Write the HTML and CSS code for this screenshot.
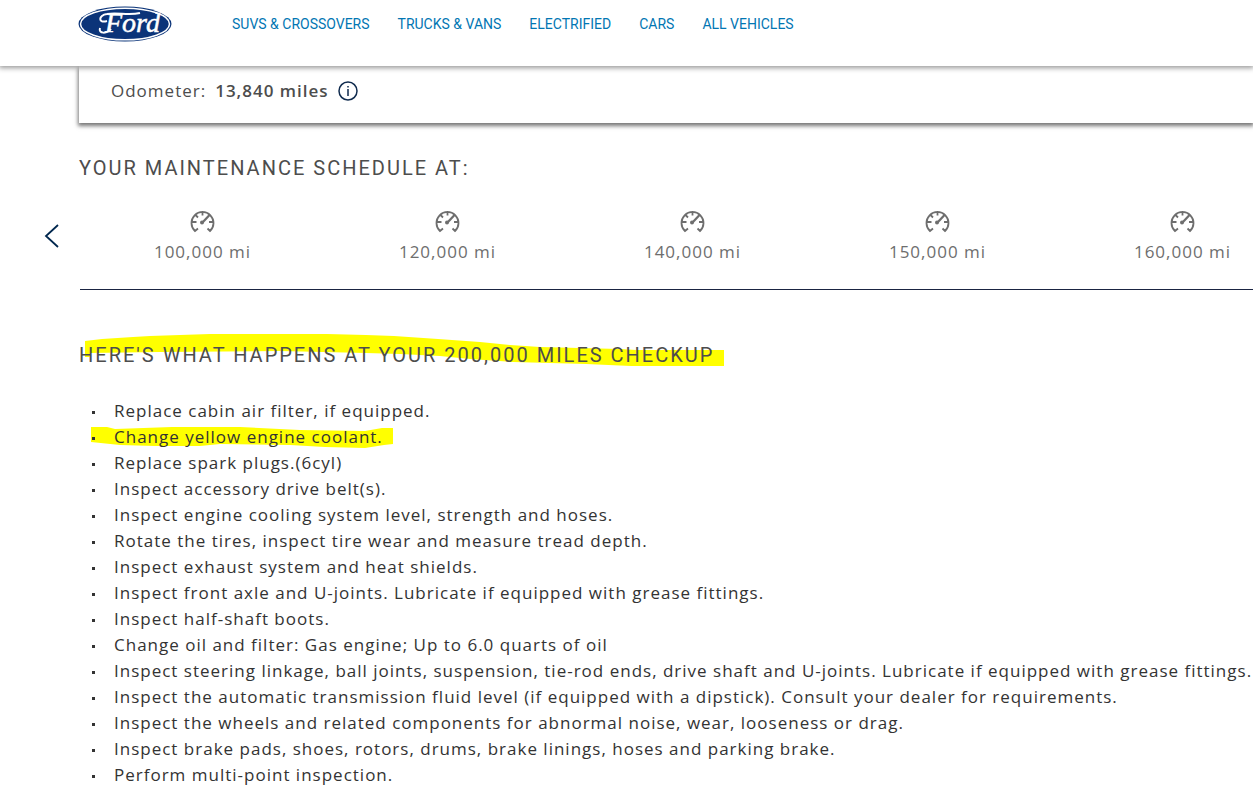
FILE: index.html
```html
<!DOCTYPE html>
<html lang="en">
<head>
<meta charset="utf-8">
<title>Ford Maintenance Schedule</title>
<link rel="stylesheet" href="styles.css">
</head>
<body>
<svg class="defs" aria-hidden="true">
  <symbol id="gauge" viewBox="0 0 26 24">
    <g fill="none" stroke="currentColor" stroke-width="1.800">
      <path d="M8 19.500 L5 22 A11 11 0 1 1 20 22 L17.500 19.500 M1.500 13 H6.500 M12.500 2 V6.500 M19 13 H23.500 M5 5.500 L8 8.500"/>
      <path d="M12.500 13.500 L20 5.500" stroke-width="2.200"/>
    </g>
    <circle cx="12" cy="13.500" r="2" fill="currentColor"/>
  </symbol>
</svg>
<header class="header">
  <a class="logo" href="#" aria-label="Ford home">
    <svg width="94" height="36" viewBox="0 0 94 36">
      <ellipse cx="47" cy="18" rx="46.500" ry="17.500" fill="#0b3479"/>
      <ellipse cx="47" cy="18" rx="44.500" ry="15.800" fill="none" stroke="#fff" stroke-width="1.500"/>
      <path d="M29 15 C20 18 20 9 29 8 C40 6 50 10 62 7" fill="none" stroke="#fff" stroke-width="2"/>
      <path d="M22 22 C20 28 29 28 33 23" fill="none" stroke="#fff" stroke-width="2"/>
      <text class="logo-text" x="27" y="26">Ford</text>
    </svg>
  </a>
  <nav class="nav">
    <a href="#">SUVS &amp; CROSSOVERS</a>
    <a href="#">TRUCKS &amp; VANS</a>
    <a href="#">ELECTRIFIED</a>
    <a href="#">CARS</a>
    <a href="#">ALL VEHICLES</a>
  </nav>
</header>
<main class="main">
  <section class="vehicle">
    <span>Odometer:</span>
    <strong>13,840 miles</strong>
    <button class="info" type="button" aria-label="Odometer information">
      <svg width="20" height="20" viewBox="0 0 20 20"><circle cx="10" cy="10" r="9" fill="none" stroke="#102b4e" stroke-width="1.500"/><path d="M10 8V15M10 5V6.500" stroke="#102b4e" stroke-width="1.500"/></svg>
    </button>
  </section>
  <h2 class="title">YOUR MAINTENANCE SCHEDULE AT:</h2>
  <section class="schedule">
    <button class="previous" type="button" aria-label="Previous mileages">
      <svg width="16" height="26" viewBox="0 0 16 26"><path d="M14 2L2 13L14 24" fill="none" stroke="#00274e" stroke-width="1.800"/></svg>
    </button>
    <div class="stops">
      <button class="stop" type="button"><svg class="gauge"><use href="#gauge"/></svg>100,000 mi</button>
      <button class="stop" type="button"><svg class="gauge"><use href="#gauge"/></svg>120,000 mi</button>
      <button class="stop" type="button"><svg class="gauge"><use href="#gauge"/></svg>140,000 mi</button>
      <button class="stop" type="button"><svg class="gauge"><use href="#gauge"/></svg>150,000 mi</button>
      <button class="stop" type="button"><svg class="gauge"><use href="#gauge"/></svg>160,000 mi</button>
    </div>
  </section>
  <h2 class="title checkup">
    <svg class="marker marker-title" width="650" height="40" viewBox="79 332 650 40" aria-hidden="true"><path fill="#ff0" d="M85 341L102 339L133 337L150 336L180 335L210 334H327L366 335L394 336L438 339L480 342L510 345L540 347L620 349L636 350H724V366H631L586 364L550 363L513 362L470 359L440 356L400 354L366 353L280 351L160 352L90 353V357H85Z"/></svg>
    <span class="marked">HERE'S WHAT HAPPENS AT YOUR 200,000 MILES CHECKUP</span>
  </h2>
  <ul class="tasks">
    <li>Replace cabin air filter, if equipped.</li>
    <li>
      <svg class="marker marker-task" width="310" height="26" viewBox="90 424 310 26" aria-hidden="true"><path fill="#ff0" d="M91 427H107L115 429L172 427H240L300 430L365 431L382 428H393V444L384 445L365 448L325 447L290 445L220 444L200 446H155L120 445L91 442Z"/></svg>
      <span class="marked">Change yellow engine coolant.</span>
    </li>
    <li>Replace spark plugs.(6cyl)</li>
    <li>Inspect accessory drive belt(s).</li>
    <li>Inspect engine cooling system level, strength and hoses.</li>
    <li>Rotate the tires, inspect tire wear and measure tread depth.</li>
    <li>Inspect exhaust system and heat shields.</li>
    <li>Inspect front axle and U-joints. Lubricate if equipped with grease fittings.</li>
    <li>Inspect half-shaft boots.</li>
    <li>Change oil and filter: Gas engine; Up to 6.0 quarts of oil</li>
    <li>Inspect steering linkage, ball joints, suspension, tie-rod ends, drive shaft and U-joints. Lubricate if equipped with grease fittings.</li>
    <li>Inspect the automatic transmission fluid level (if equipped with a dipstick). Consult your dealer for requirements.</li>
    <li>Inspect the wheels and related components for abnormal noise, wear, looseness or drag.</li>
    <li>Inspect brake pads, shoes, rotors, drums, brake linings, hoses and parking brake.</li>
    <li>Perform multi-point inspection.</li>
  </ul>
</main>
</body>
</html>
```
FILE: styles.css
```css
* { box-sizing: border-box; }
body {
  margin: 0;
  overflow: hidden;
  background: #fff;
  color: #333;
  font: 17px/26px "Open Sans", sans-serif;
  letter-spacing: 1px;
}
button {
  border: 0;
  padding: 0;
  background: none;
  color: inherit;
  font: inherit;
  letter-spacing: inherit;
}
.defs { display: none; }
.header {
  position: relative;
  z-index: 1;
  display: flex;
  gap: 60px;
  height: 66px;
  padding: 6px 78px;
  background: #fff;
  box-shadow: 0 1px 5px 1px #999;
}
.logo { height: 36px; }
.logo svg { display: block; }
.logo-text {
  fill: #fff;
  stroke: #fff;
  stroke-width: 0.5px;
  font: italic 28px "Liberation Serif", serif;
  letter-spacing: 0;
}
.nav {
  display: flex;
  gap: 28px;
  height: 36px;
  align-items: center;
  font: 400 14px/20px Roboto, sans-serif;
  letter-spacing: 0;
}
.nav a {
  color: #0276b3;
  text-decoration: none;
  white-space: nowrap;
}
.main { padding-left: 79px; }
.vehicle {
  display: flex;
  align-items: center;
  gap: 9px;
  height: 57px;
  padding: 0 32px 8px;
  color: #4d4d4d;
  box-shadow: 0 2px 4px 1px #777;
}
.vehicle strong { font-weight: 600; }
.info { height: 20px; }
.info svg { display: block; }
.title {
  margin: 0;
  color: #4d4d4d;
  font: 400 20px/26px Roboto, sans-serif;
  letter-spacing: 2px;
  white-space: nowrap;
}
.vehicle + .title { margin-top: 32px; }
.schedule {
  display: flex;
  align-items: center;
  height: 109px;
  margin-left: -35px;
}
.previous { flex: 0 0 36px; text-align: left; }
.previous svg { display: block; }
.stops {
  display: flex;
  flex: none;
  align-self: stretch;
  border-bottom: 1px solid #1a2442;
}
.stop {
  display: flex;
  flex: 0 0 245px;
  flex-direction: column;
  align-items: center;
  gap: 6px;
  padding-top: 28px;
  color: #6e6e6e;
}
.gauge { width: 26px; height: 24px; }
.checkup { position: relative; margin-top: 52px; }
.marker { position: absolute; }
.marker-title { left: 0; top: -10px; }
.marker-task { left: -24px; top: 0; }
.marked { position: relative; }
.tasks {
  margin: 30px 0 0;
  padding: 0 0 0 35px;
  list-style: none;
  white-space: nowrap;
}
.tasks li { position: relative; }
.tasks li::before {
  content: "";
  position: absolute;
  z-index: 1;
  left: -22px;
  top: 13px;
  width: 3px;
  height: 3px;
  background: #333;
}
```
